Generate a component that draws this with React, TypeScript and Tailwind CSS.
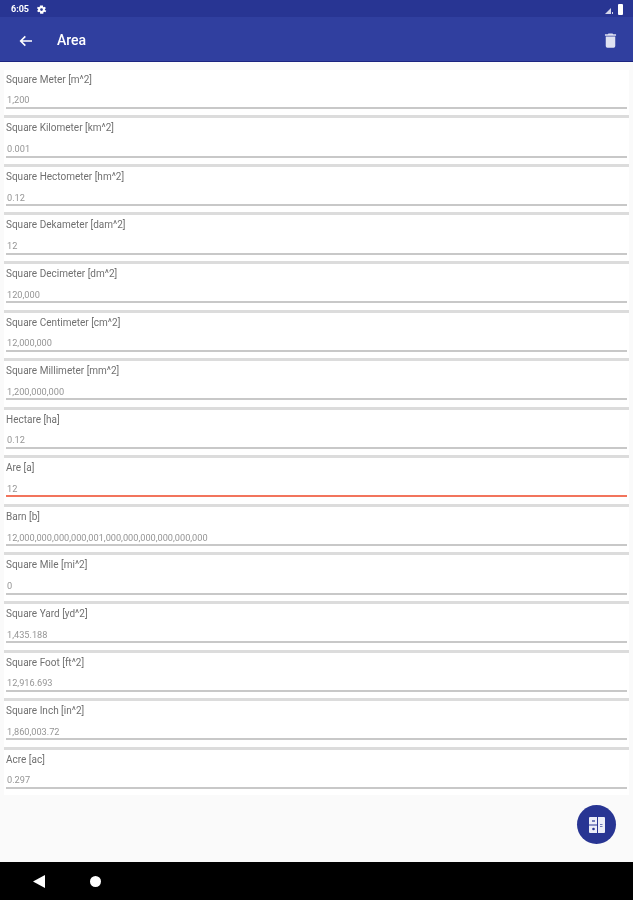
import React from "react";

const rows: [string, string, boolean?][] = [
  ["Square Meter [m^2]", "1,200"],
  ["Square Kilometer [km^2]", "0.001"],
  ["Square Hectometer [hm^2]", "0.12"],
  ["Square Dekameter [dam^2]", "12"],
  ["Square Decimeter [dm^2]", "120,000"],
  ["Square Centimeter [cm^2]", "12,000,000"],
  ["Square Millimeter [mm^2]", "1,200,000,000"],
  ["Hectare [ha]", "0.12"],
  ["Are [a]", "12", true],
  ["Barn [b]", "12,000,000,000,000,001,000,000,000,000,000,000"],
  ["Square Mile [mi^2]", "0"],
  ["Square Yard [yd^2]", "1,435.188"],
  ["Square Foot [ft^2]", "12,916.693"],
  ["Square Inch [in^2]", "1,860,003.72"],
  ["Acre [ac]", "0.297"],
];

export default function App() {
  return (
    <div className="relative flex h-[900px] w-[633px] flex-col overflow-hidden bg-[#fafafa] font-['Roboto',sans-serif] blur-[0.6px]">
      <div className="flex h-[17px] items-center justify-between bg-[#283593] pl-[11px] pr-[10px] pt-[1px] text-white">
        <div className="flex items-center gap-[7px]">
          <span className="text-[9px] font-bold leading-none">6:05</span>
          <svg width="11" height="11" viewBox="0 0 24 24" fill="#fff">
            <path d="M19.4 13a7.500 7.500 0 0 0 0-2l2.100-1.600-2-3.500-2.500 1a7.500 7.500 0 0 0-1.700-1L15.400 3h-6.800l-.4 2.900a7.500 7.500 0 0 0-1.700 1l-2.500-1-2 3.500L4.600 11a7.500 7.500 0 0 0 0 2l-2.100 1.600 2 3.500 2.500-1a7.500 7.500 0 0 0 1.700 1l.4 2.900h6.800l.4-2.900a7.500 7.500 0 0 0 1.700-1l2.500 1 2-3.500zM12 15a3 3 0 1 1 0-6 3 3 0 0 1 0 6z" />
          </svg>
        </div>
        <div className="flex items-center gap-[5px]">
          <svg width="8" height="8" viewBox="0 0 8 8" fill="#fff" opacity="0.8" className="mt-[2px]">
            <path d="M6 2v6H0z" />
            <path d="M8 6v2H7V6z" />
          </svg>
          <div className="h-[11px] w-[5px] rounded-[1px] bg-white" />
        </div>
      </div>
      <div className="flex h-[44px] items-center bg-[#303f9f] pl-[18px] pr-[13px] pt-[3px] text-white">
        <svg width="16" height="16" viewBox="0 0 24 24" fill="none" stroke="#fff" strokeWidth="2.400">
          <path d="M21 12H4M11 5l-7 7 7 7" />
        </svg>
        <span className="ml-[23px] text-[14px] font-medium">Area</span>
        <svg className="ml-auto" width="19" height="19" viewBox="0 0 24 24" fill="#dfe2f2">
          <path d="M6 19a2 2 0 0 0 2 2h8a2 2 0 0 0 2-2V7H6zM19 4h-3.500l-1-1h-5l-1 1H5v2h14z" />
        </svg>
      </div>
      <div className="h-[1px] bg-[#1a237e]" />
      <div className="flex-1 bg-[#fafafa] pt-[7.8px]">
        <div className="mx-[4px] flex flex-col gap-[3px] bg-[#dcdcdc]">
          {rows.map(([label, value, active]) => (
            <div key={label} className="flex h-[45.57px] flex-col bg-white px-[2px] pt-[3px]">
              <span className="text-[10px] leading-[14px] text-[#707070]">{label}</span>
              <span className="mt-[6.7px] pl-[1px] text-[9.200px] leading-[13px] text-[#959595]">{value}</span>
              <div className={active ? "mt-[0.5px] h-[2px] bg-[#f2745c]" : "mt-[0.5px] h-[2px] bg-[#c8c8c8]"} />
            </div>
          ))}
        </div>
      </div>
      <div className="absolute left-[577px] top-[805px] flex h-[39px] w-[39px] items-center justify-center rounded-full bg-[#283593]">
        <svg width="16" height="16" viewBox="0 0 16 16">
          <rect x="0" y="0" width="16" height="16" rx="1" fill="#eceef8" />
          <path d="M8.500 0v16M0 8h8.500" stroke="#283593" strokeWidth="1" />
          <path d="M3 4h3" stroke="#283593" strokeWidth="1.200" />
          <circle cx="4.500" cy="12" r="1.300" fill="#283593" />
          <path d="M11 7.500h2.500M11 9.500h2.500" stroke="#6f78b5" strokeWidth="1" />
        </svg>
      </div>
      <div className="flex h-[38px] items-center bg-black pl-[33px]">
        <svg width="12" height="13" viewBox="0 0 12 13" fill="#fff">
          <path d="M12 0v13L0 6.500z" />
        </svg>
        <div className="ml-[45px] h-[11px] w-[11px] rounded-full bg-white" />
      </div>
    </div>
  );
}
